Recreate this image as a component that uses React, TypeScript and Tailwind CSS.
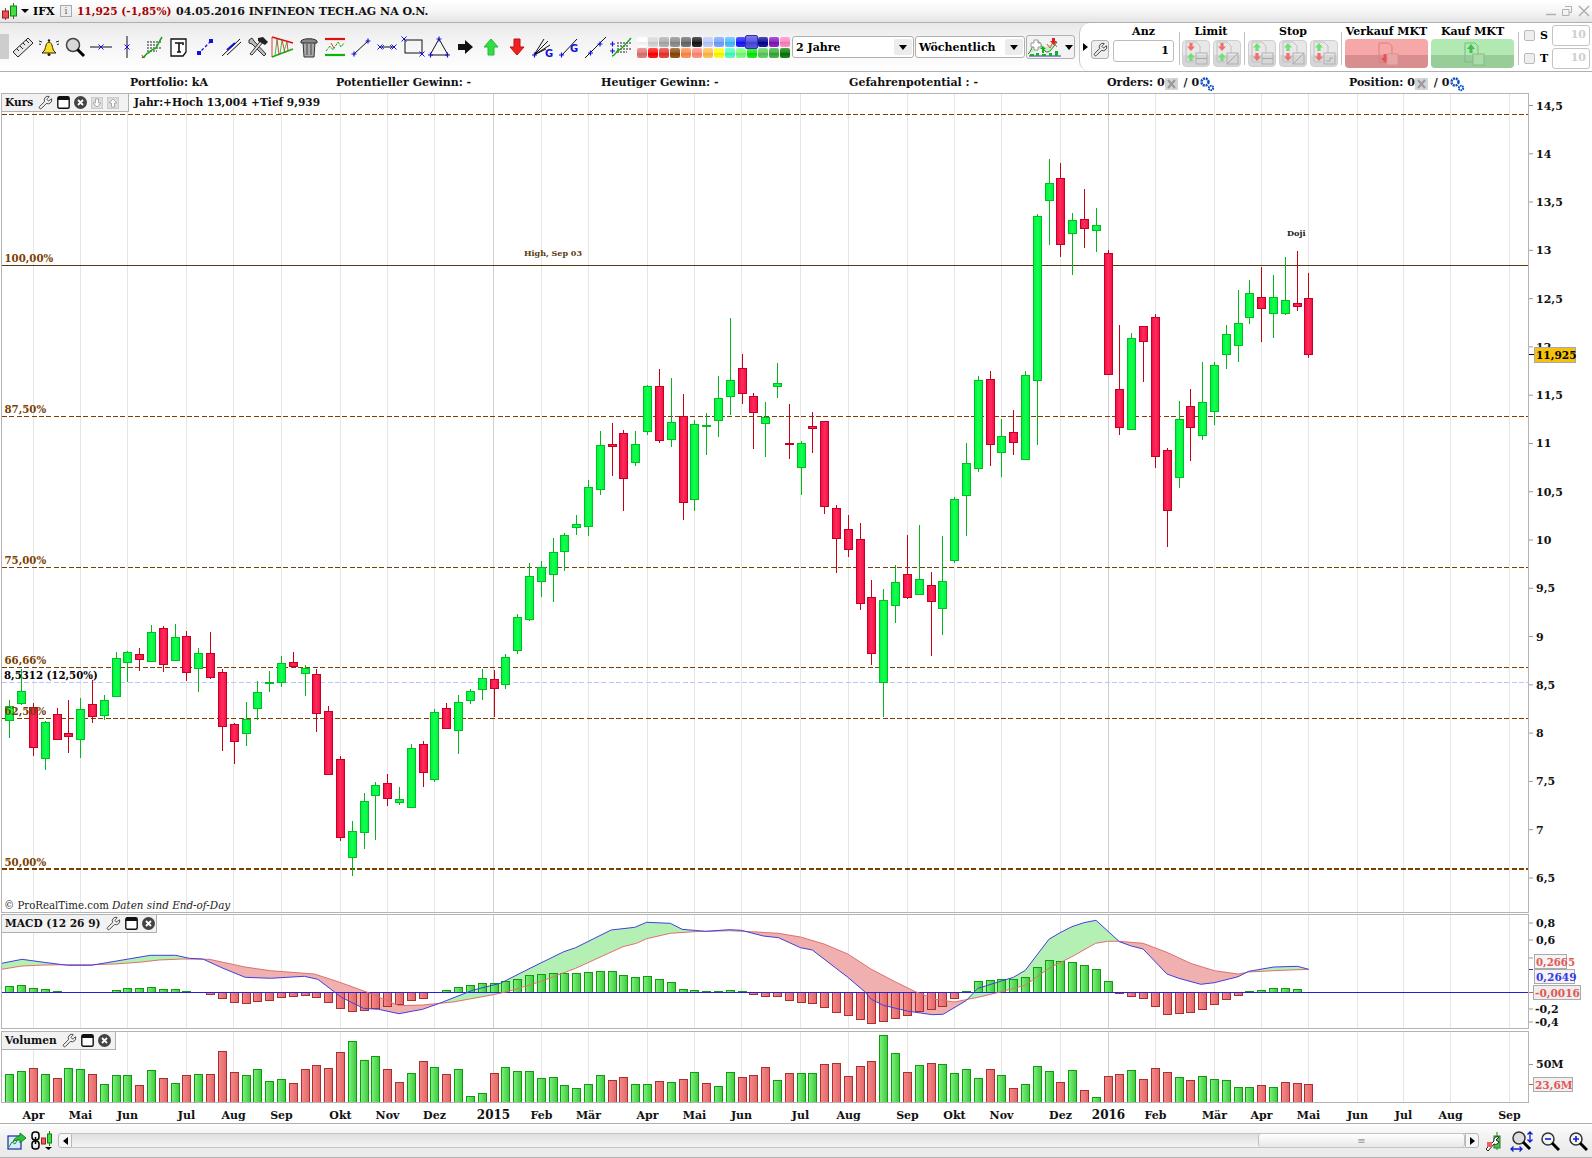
import React from 'react';
import { Wrench } from 'lucide-react';

// [wick top, body top, body bottom, wick bottom, colour] in page pixels, one per week
const CANDLES: [number, number, number, number, 'g' | 'r'][] = [
  [700,706,720,738,'g'],[669,691,703,705,'g'],[703,707,747,756,'r'],[721,722,758,770,'g'],[708,714,739,740,'r'],
  [700,733,736,753,'r'],[698,709,739,758,'g'],[680,704,716,723,'r'],[695,700,715,720,'g'],[652,658,696,696,'g'],
  [651,652,662,682,'g'],[648,654,659,671,'r'],[625,632,661,661,'g'],[626,628,664,672,'r'],[624,637,660,660,'g'],
  [631,636,672,681,'r'],[648,653,668,692,'g'],[632,653,677,679,'r'],[669,672,726,751,'r'],[723,724,741,764,'r'],
  [702,719,733,746,'g'],[681,692,708,720,'g'],[671,682,683,692,'g'],[656,663,682,687,'g'],[652,662,666,668,'r'],
  [665,668,673,696,'g'],[669,674,713,732,'r'],[706,711,774,774,'r'],[756,759,837,841,'r'],[821,831,857,876,'g'],
  [793,801,832,849,'g'],[782,785,795,840,'g'],[774,783,798,806,'r'],[787,799,802,805,'g'],[744,748,807,807,'g'],
  [741,744,772,787,'r'],[709,712,779,782,'g'],[703,708,728,728,'r'],[695,702,730,754,'g'],[689,691,700,704,'g'],
  [669,678,689,700,'g'],[670,679,688,717,'r'],[654,657,684,689,'g'],[614,617,650,654,'g'],[563,576,619,621,'g'],
  [561,567,581,597,'g'],[538,552,574,602,'g'],[533,535,551,571,'g'],[515,524,527,535,'g'],[480,487,526,536,'g'],
  [431,445,489,495,'g'],[423,444,446,476,'r'],[430,433,478,511,'r'],[431,444,462,466,'g'],[385,386,431,435,'g'],
  [369,386,440,443,'r'],[378,422,439,447,'g'],[394,416,502,520,'r'],[420,424,499,511,'g'],[413,425,426,455,'g'],
  [376,398,420,437,'g'],[318,380,396,415,'g'],[354,368,393,404,'r'],[393,396,412,449,'r'],[402,417,423,457,'g'],
  [363,383,386,398,'g'],[404,443,444,459,'r'],[441,443,467,495,'g'],[412,426,428,453,'r'],[421,421,506,514,'r'],
  [505,508,538,573,'r'],[515,529,549,557,'r'],[523,539,603,610,'r'],[580,597,653,665,'r'],[589,600,682,717,'g'],
  [565,582,605,623,'g'],[535,574,597,599,'r'],[525,579,594,594,'g'],[572,585,601,656,'r'],[536,581,608,635,'g'],
  [497,499,560,563,'g'],[443,463,495,536,'g'],[376,380,468,472,'g'],[371,379,444,466,'r'],[419,436,452,477,'g'],
  [410,432,442,455,'r'],[371,375,459,460,'g'],[214,216,380,445,'g'],[159,183,200,245,'g'],[163,178,244,257,'r'],
  [213,220,233,275,'g'],[189,219,228,248,'r'],[208,225,230,252,'g'],[250,253,374,374,'r'],[325,389,427,435,'r'],
  [333,338,429,429,'g'],[326,326,341,382,'r'],[314,317,456,468,'r'],[448,450,510,547,'r'],[401,419,477,488,'g'],
  [389,406,427,461,'r'],[362,402,435,440,'g'],[362,365,411,425,'g'],[325,334,354,369,'g'],[290,323,345,362,'g'],
  [280,293,317,324,'g'],[267,297,308,342,'r'],[275,297,313,338,'g'],[257,300,313,315,'g'],[251,303,306,311,'r'],
  [273,298,354,358,'r'],
];

const HIST = [
  6,7,4,3,1,0,0,0,0,2,4,4,5,3,3,1,0,-2,-6,-10,-11,-9,-8,-5,-4,-3,-5,-10,-16,-19,-18,-16,-14,-12,-8,-6,0,2,5,7,9,9,11,13,17,
  18,19,19,19,20,21,21,17,15,16,13,10,3,2,1,1,2,1,-2,-4,-4,-8,-10,-11,-15,-20,-23,-27,-31,-29,-26,-23,-19,-17,-14,-6,1,11,12,13,13,15,25,32,
  31,30,27,23,11,-1,-4,-6,-14,-22,-21,-20,-17,-12,-7,-3,1,2,4,4,3,0,
];

const VOL: [number, 'g' | 'r'][] = [
  [28,'g'],[31,'g'],[34,'r'],[28,'g'],[24,'r'],[34,'g'],[33,'g'],[28,'r'],[18,'g'],[27,'g'],[27,'g'],[17,'r'],[32,'g'],[24,'r'],[19,'g'],
  [27,'r'],[28,'g'],[28,'r'],[51,'r'],[30,'r'],[27,'g'],[33,'g'],[21,'g'],[23,'g'],[19,'r'],[33,'r'],[37,'r'],[34,'r'],[50,'r'],[61,'g'],
  [42,'g'],[46,'g'],[33,'r'],[20,'r'],[29,'g'],[41,'r'],[35,'g'],[28,'r'],[33,'g'],[6,'g'],[9,'g'],[29,'r'],[35,'g'],[31,'g'],[31,'g'],
  [24,'g'],[25,'g'],[17,'g'],[14,'g'],[18,'g'],[27,'g'],[22,'r'],[25,'r'],[18,'g'],[18,'g'],[21,'r'],[20,'g'],[23,'r'],[30,'g'],[19,'r'],
  [16,'g'],[30,'g'],[25,'r'],[27,'r'],[35,'r'],[22,'g'],[29,'r'],[29,'g'],[29,'g'],[38,'r'],[39,'r'],[26,'r'],[36,'r'],[41,'r'],[67,'g'],
  [49,'g'],[30,'r'],[37,'g'],[39,'r'],[38,'g'],[29,'g'],[33,'g'],[24,'g'],[33,'r'],[27,'g'],[14,'r'],[18,'g'],[36,'g'],[31,'g'],[20,'r'],
  [32,'g'],[12,'r'],[5,'g'],[26,'r'],[28,'r'],[32,'g'],[23,'r'],[34,'r'],[30,'r'],[25,'g'],[22,'r'],[26,'g'],[23,'g'],[22,'g'],[15,'g'],
  [15,'g'],[17,'r'],[15,'g'],[20,'r'],[19,'r'],[18,'r'],
];

const pts = (off: number, sx: number, raw: number[][]) => raw.map(([x, v]) => [off + x / sx, 900 + v / 3]);

const BLUE = [
  ...pts(0, 2.958, [[5,190],[65,178],[130,187],[200,196],[270,196],[340,184],[445,166],[520,166],[560,175],[600,177],[660,205],[725,232],[800,235],[900,229],[940,238],[1010,292],[1075,325],[1120,328],[1180,341],[1250,328],[1300,310],[1400,270],[1480,250]]),
  ...pts(530, 2.958, [[0,205],[100,155],[135,143],[240,90],[310,82],[345,67],[415,70],[450,88],[520,94],[590,89],[625,91],[690,108],[735,113],[800,143],[835,150],[940,232],[990,275],[1010,298],[1045,316],[1120,334],[1190,344],[1222,343],[1290,302],[1325,265],[1430,232],[1465,211],[1535,118]]),
  ...pts(1060, 2.947, [[0,98],[35,80],[70,68],[106,61],[175,125],[210,138],[245,147],[315,222],[350,235],[415,253],[455,248],[525,230],[556,214],[630,201],[700,199],[733,208]]),
];
const SIGNAL = [
  ...pts(0, 2.958, [[5,208],[65,198],[130,195],[200,194],[270,194],[340,192],[420,186],[470,180],[540,177],[620,178],[660,187],[725,201],[800,212],[930,222],[1000,245],[1090,278],[1180,317],[1250,315],[1340,306],[1450,286],[1500,275]]),
  ...pts(530, 2.958, [[0,255],[50,238],[135,205],[275,140],[315,130],[345,116],[415,100],[485,95],[590,92],[655,95],[735,100],[800,111],[870,132],[940,162],[1010,208],[1080,245],[1140,275],[1200,298],[1255,306],[1325,292],[1395,275],[1465,256],[1535,205]]),
  ...pts(1060, 2.947, [[0,188],[35,170],[105,130],[140,124],[175,124],[245,130],[315,157],[385,190],[455,212],[525,222],[556,216],[630,212],[733,208]]),
];

const GRID: [number, string][] = [
  [33,'Apr'],[80,'Mai'],[127,'Jun'],[186,'Jul'],[233,'Aug'],[281,'Sep'],[340,'Okt'],[387,'Nov'],[434,'Dez'],[493,'2015'],
  [541,'Feb'],[588,'Mär'],[647,'Apr'],[694,'Mai'],[741,'Jun'],[800,'Jul'],[848,'Aug'],[907,'Sep'],[954,'Okt'],[1001,'Nov'],
  [1060,'Dez'],[1108,'2016'],[1155,'Feb'],[1214,'Mär'],[1261,'Apr'],[1308,'Mai'],[1357,'Jun'],[1403,'Jul'],[1450,'Aug'],[1509,'Sep'],
];

const FIB_Y = [114, 416, 567, 667, 718];

const PRICES = ['14,5','14','13,5','13','12,5','12','11,5','11','10,5','10','9,5','9','8,5','8','7,5','7','6,5'];

const colX = (i: number) => Math.round(9.33 + 11.81 * i) + 0.5;

function interp(line: number[][], x: number) {
  const sorted = [...line].sort((a, b) => a[0] - b[0]);
  for (let i = 1; i < sorted.length; i++) {
    if (x <= sorted[i][0]) {
      const [x0, y0] = sorted[i - 1];
      const [x1, y1] = sorted[i];
      return y0 + ((y1 - y0) * (x - x0)) / Math.max(x1 - x0, 0.01);
    }
  }
  return sorted[sorted.length - 1][1];
}

const toPath = (line: number[][]) =>
  [...line].sort((a, b) => a[0] - b[0]).map(([x, y], i) => `${i ? 'L' : 'M'}${x.toFixed(1)} ${y.toFixed(1)}`).join(' ');

function GridLines({ y1, y2 }: { y1: number; y2: number }) {
  return (
    <g shapeRendering="crispEdges">
      {GRID.map(([x, label]) => (
        <line key={x} x1={x + 0.5} x2={x + 0.5} y1={y1} y2={y2} stroke={/^20/.test(label) ? '#cfcfcf' : '#e6e6e6'} />
      ))}
    </g>
  );
}

function BarGradients({ g, r }: { g: string; r: string }) {
  return (
    <defs>
      <linearGradient id={g}><stop offset="0" stopColor="#7cf27c" /><stop offset="1" stopColor="#3fc93f" /></linearGradient>
      <linearGradient id={r}><stop offset="0" stopColor="#f88888" /><stop offset="1" stopColor="#e06868" /></linearGradient>
    </defs>
  );
}

function PriceChart() {
  return (
    <svg width={1526} height={818} viewBox="2 94 1526 818" className="block">
      <defs>
        <linearGradient id="cg"><stop offset="0" stopColor="#00f040" /><stop offset="0.5" stopColor="#12ff50" /><stop offset="1" stopColor="#00f040" /></linearGradient>
        <linearGradient id="cr"><stop offset="0" stopColor="#f01040" /><stop offset="0.5" stopColor="#ff2a60" /><stop offset="1" stopColor="#f01040" /></linearGradient>
      </defs>
      <GridLines y1={94} y2={912} />
      <g shapeRendering="crispEdges">
        {FIB_Y.map((y) => (
          <line key={y} x1={2} x2={1528} y1={y + 0.5} y2={y + 0.5} stroke="#7a3e00" strokeDasharray="5 2.4" />
        ))}
        <line x1={2} x2={1528} y1={265.5} y2={265.5} stroke="#5a3a10" />
        <line x1={2} x2={1528} y1={682.5} y2={682.5} stroke="#b4c8ff" strokeDasharray="5 2.4" />
        <line x1={2} x2={1528} y1={869} y2={869} stroke="#7a3e00" strokeWidth={2} strokeDasharray="5 2.4" />
        {CANDLES.map(([wt, bt, bb, wb, c], i) => {
          const x = colX(i);
          return (
            <g key={i}>
              <line x1={x} x2={x} y1={wt} y2={wb} stroke={c === 'g' ? '#00b818' : '#c80010'} />
              <rect x={x - 4} y={bt + 0.5} width={8} height={Math.max(bb - bt, 1)} fill={`url(#c${c})`} stroke={c === 'g' ? '#00c020' : '#c80020'} />
            </g>
          );
        })}
      </g>
      <g fontWeight="700" fontSize="10.2" fill="#7a4000">
        <text x={4.5} y={262}>100,00%</text>
        <text x={4.5} y={413}>87,50%</text>
        <text x={4.5} y={564}>75,00%</text>
        <text x={4.5} y={664}>66,66%</text>
        <text x={4.5} y={715}>62,50%</text>
        <text x={4.5} y={866}>50,00%</text>
      </g>
      <text x={4} y={679} fontWeight="700" fontSize="10.2" fill="#000">8,5312 (12,50%)</text>
      <text x={524} y={256} fontWeight="700" fontSize="8" fill="#5a3a10">High, Sep 03</text>
      <text x={1287} y={236} fontWeight="700" fontSize="8.2" fill="#222">Doji</text>
      <text x={4} y={909} fontSize="10.2" fill="#222">© ProRealTime.com</text>
      <text x={112} y={909} fontSize="10.4" fontStyle="italic" fill="#222">Daten sind End-of-Day</text>
    </svg>
  );
}

function PriceAxis() {
  return (
    <svg width={63} height={820} viewBox="1529 93 63 820" className="block">
      {PRICES.map((p, i) => {
        const y = 105.5 + i * 48.28;
        return (
          <g key={p}>
            <line x1={1529} x2={1533} y1={y} y2={y} stroke="#999" />
            <text x={1536} y={y + 4} fontWeight="700" fontSize="11" fill="#111">{p}</text>
          </g>
        );
      })}
      <line x1={1529} x2={1534} y1={354.5} y2={354.5} stroke="#000" />
      <rect x={1534.5} y={347.5} width={41} height={15} fill="#f4c20d" stroke="#a8a8a8" />
      <text x={1536} y={359} fontWeight="700" fontSize="10.6" fill="#000">11,925</text>
    </svg>
  );
}

function MacdChart() {
  const green: string[] = [];
  const red: string[] = [];
  for (let x = 2; x < 1309; x++) {
    const b = interp(BLUE, x + 0.5);
    const s = interp(SIGNAL, x + 0.5);
    (b < s ? green : red).push(`M${x} ${b.toFixed(1)}V${s.toFixed(1)}h1V${b.toFixed(1)}z`);
  }
  return (
    <svg width={1526} height={113} viewBox="2 915 1526 113" className="block">
      <BarGradients g="bg" r="br" />
      <GridLines y1={915} y2={1028} />
      <path d={green.join('')} fill="#b4f0b4" shapeRendering="crispEdges" />
      <path d={red.join('')} fill="#f0b0b0" shapeRendering="crispEdges" />
      <g shapeRendering="crispEdges">
        {HIST.map((h, i) => {
          if (h === 0) return null;
          const x = colX(i);
          return h > 0 ? (
            <rect key={i} x={x - 4} y={992.5 - h} width={8} height={h} fill="url(#bg)" stroke="#109a10" />
          ) : (
            <rect key={i} x={x - 4} y={992.5} width={8} height={-h} fill="url(#br)" stroke="#a83030" />
          );
        })}
        <line x1={2} x2={1528} y1={992.5} y2={992.5} stroke="#2020e0" />
      </g>
      <path d={toPath(SIGNAL)} fill="none" stroke="#e07070" strokeWidth={1} />
      <path d={toPath(BLUE)} fill="none" stroke="#4040e0" strokeWidth={1} />
    </svg>
  );
}

function MacdAxis() {
  return (
    <svg width={63} height={115} viewBox="1529 914 63 115" className="block">
      {[[923,'0,8'],[940,'0,6'],[958,'0,4'],[1009,'-0,2'],[1022,'-0,4']].map(([y, t]) => (
        <g key={t}>
          <line x1={1529} x2={1533} y1={y} y2={y} stroke="#999" />
          <text x={t === '-0,2' || t === '-0,4' ? 1535 : 1536} y={Number(y) + 4} fontWeight="700" fontSize="11" fill="#111">{t}</text>
        </g>
      ))}
      <line x1={1529} x2={1533} y1={969.5} y2={969.5} stroke="#3030e0" />
      <line x1={1529} x2={1533} y1={992.5} y2={992.5} stroke="#e05050" />
      <rect x={1534.5} y={954.5} width={32} height={14} fill="#f4f4f4" stroke="#aaa" />
      <text fontWeight="700" x={1536} y={965.5} fontSize="10.2" fill="#e05858">0,2665</text>
      <rect x={1534.5} y={969.5} width={40} height={14} fill="#f4f4f4" stroke="#aaa" />
      <text fontWeight="700" x={1536} y={980.5} fontSize="10.6" fill="#3838e8">0,2649</text>
      <rect x={1533.5} y={985.5} width={47} height={14} fill="#eeeeee" stroke="#aaa" />
      <text fontWeight="700" x={1535} y={996.5} fontSize="10.6" fill="#e05858">-0,0016</text>
    </svg>
  );
}

function VolumeChart() {
  return (
    <svg width={1526} height={70} viewBox="2 1032 1526 70" className="block">
      <BarGradients g="vg" r="vr" />
      <GridLines y1={1032} y2={1102} />
      <g shapeRendering="crispEdges">
        {VOL.map(([h, c], i) => {
          const x = colX(i);
          return <rect key={i} x={x - 4} y={1102.5 - h} width={8} height={h + 1} fill={`url(#v${c})`} stroke={c === 'g' ? '#109a10' : '#a83030'} />;
        })}
      </g>
    </svg>
  );
}

function VolumeAxis() {
  return (
    <svg width={63} height={72} viewBox="1529 1031 63 72" className="block">
      <line x1={1529} x2={1533} y1={1064.5} y2={1064.5} stroke="#999" />
      <text x={1536} y={1067.5} fontWeight="700" fontSize="11" fill="#111">50M</text>
      <line x1={1529} x2={1533} y1={1084.5} y2={1084.5} stroke="#e05050" />
      <rect x={1533.5} y={1077.5} width={39} height={14} fill="#f0f0f0" stroke="#aaa" />
      <text x={1535} y={1088.5} fontWeight="700" fontSize="10.6" fill="#e05858">23,6M</text>
    </svg>
  );
}

function TimeAxis() {
  return (
    <svg width={1592} height={20} viewBox="0 1103 1592 20" className="block">
      {GRID.map(([x, label]) => (
        <text key={x} x={x + 0.5} y={1119} textAnchor="middle" fontWeight="700" fontSize={/^20/.test(label) ? 12 : 11} fill="#111">{label}</text>
      ))}
    </svg>
  );
}

function Ic({ children, w = 24 }: { children: React.ReactNode; w?: number }) {
  return <svg width={w} height={24} viewBox={`0 0 ${w} 24`} className="block shrink-0">{children}</svg>;
}

const BX = ({ x, y }: { x: number; y: number }) => (
  <path d={`M${x - 2.5} ${y - 2.5}l5 5m0-5l-5 5`} stroke="#1010e0" strokeWidth={1} fill="none" />
);

const TOOL_ICONS: React.ReactNode[] = [
  // ruler
  <g key="ruler"><path d="M2 17 L17 3 L22 8 L7 22Z" fill="#e8e8e8" stroke="#222" /><path d="M6 14l2 2M9 11l3 3M12 8l2 2M15 5l3 3" stroke="#222" /></g>,
  // bell
  <g key="bell"><path d="M7 16c2-2 1-8 5-9 4 1 3 7 5 9l2 2H5z" fill="#ffe020" stroke="#222" /><circle cx="12" cy="19.5" r="1.5" fill="#222" /><circle cx="12" cy="5.5" r="1.2" fill="#222" /><path d="M2 6l3 1M2 9l2 .5M22 6l-3 1M22 9l-2 .5" stroke="#222" /></g>,
  // magnifier
  <g key="mag"><circle cx="10" cy="10" r="6.5" fill="#d8d8d8" stroke="#444" strokeWidth="1.5" /><path d="M14.5 14.5L21 21" stroke="#000" strokeWidth="3" /></g>,
  // horizontal line
  <g key="hl"><path d="M1 12H23" stroke="#111" /><BX x={12} y={12} /></g>,
  // vertical line
  <g key="vl"><path d="M12 1V23" stroke="#111" /><BX x={12} y={12} /></g>,
  // fibonacci
  <g key="fib"><path d="M6 7h14M6 10h12M6 13h14M6 16h10" stroke="#222" strokeDasharray="2 1" /><path d="M1 22c2 2 4-4 6-4s3-4 6-4 4-6 8-12" stroke="#10a810" strokeWidth="1.5" fill="none" /><path d="M1 20c1 3 2 3 3 2" stroke="#e02020" fill="none" /></g>,
  // text
  <g key="text"><path d="M4 4h15v13l-3 4H4z" fill="#fff" stroke="#111" strokeWidth="1.3" /><path d="M8 8h8v2M12 8v9M10 17h4" stroke="#111" strokeWidth="1.6" fill="none" /></g>,
  // blue cross line
  <g key="xl"><path d="M5 19L19 5" stroke="#1010e0" strokeWidth="1.3" strokeDasharray="3 2" /><rect x="4" y="16" width="4" height="4" fill="#1010e0" /><rect x="16" y="4" width="4" height="4" fill="#1010e0" /></g>,
  // parallel
  <g key="par"><path d="M3 21L21 4" stroke="#111" /><path d="M8 20L22 7" stroke="#111" /><path d="M8 15L16 8" stroke="#1010e0" strokeWidth="2" /></g>,
  // tools
  <g key="tools"><path d="M4 5l3-2 2 3 12 13-2 2L7 9 4 8z" fill="#bbb" stroke="#333" /><path d="M20 5l-13 15-2-1 12-15z" fill="#ddd" stroke="#333" /><path d="M13 3l5-1 5 5-3 3-7-4z" fill="#222" /></g>,
  // triangle fib
  <g key="tri"><path d="M1 2L22 8" stroke="#e01010" strokeWidth="1.6" /><path d="M1 22L22 14" stroke="#10b010" strokeWidth="1.6" /><path d="M1 2V22M6 4l2 16M11 5l3 13M16 7l1 9" stroke="#e01010" strokeWidth=".8" fill="none" /><path d="M6 4l-2 17M11 5l-2 14M16 7l-3 9" stroke="#10b010" strokeWidth=".8" fill="none" /></g>,
  // trash
  <g key="trash"><path d="M6 7h12l-1 15H7z" fill="#aaa" stroke="#333" /><path d="M4 6c2-3 14-3 16 0v2H4z" fill="#888" stroke="#333" /><path d="M10 9v11M14 9v11" stroke="#444" /><path d="M9 3h6v2H9z" fill="#666" /></g>,
  // channel
  <g key="chan"><path d="M2 4H22" stroke="#e01010" strokeWidth="2.2" /><path d="M2 20H22" stroke="#10b010" strokeWidth="2.2" /><path d="M3 16l4-5 3 4 5-8 3 5 3-4" stroke="#20a020" fill="none" strokeDasharray="3 1" /><path d="M8 8l3 5" stroke="#e03030" /></g>,
  // short line
  <g key="line"><path d="M5 19L19 6" stroke="#111" /><path d="M2.5 19h5M5 16.5v5M16.5 6h5M19 3.5v5" stroke="#1010e0" strokeWidth="1.2" /></g>,
  // horizontal measure
  <g key="meas"><path d="M6 12H18" stroke="#111" /><BX x={5} y={12} /><BX x={19} y={12} /><path d="M9 10l-2 2 2 2M15 10l2 2-2 2" stroke="#1010e0" fill="none" strokeWidth=".8" /></g>,
  // rectangle
  <g key="rect"><rect x="4" y="5" width="17" height="13" fill="none" stroke="#111" /><BX x={3} y={4} /><BX x={21} y={19} /></g>,
  // triangle
  <g key="tr"><path d="M12 4L3 20H21Z" fill="none" stroke="#111" /><path d="M9.5 4h5M12 1.5v5M1 20h5M3.5 17.5v5M18 20h5M20.5 17.5v5" stroke="#1010e0" strokeWidth="1.2" /></g>,
  // black arrow
  <path key="ba" d="M5 9h7V5l8 7-8 7v-4H5z" fill="#111" />,
  // up
  <path key="up" d="M12 4l7 8h-4v8H9v-8H5z" fill="#30e040" stroke="#28b838" />,
  // down
  <path key="down" d="M9 4h6v8h4l-7 8-7-8h4z" fill="#f02020" stroke="#c01010" />,
  // fan with G
  <g key="fan"><path d="M3 20L13 4M3 20L17 6M3 20L19 10M3 20L15 14" stroke="#111" /><path d="M1 20h5M3.5 17.5v5" stroke="#1010e0" strokeWidth="1.2" /><text x="14" y="22" fontSize="10" fontWeight="700" fontFamily="'DejaVu Sans',sans-serif" fill="#1010e0">G</text></g>,
  // line with G
  <g key="lg"><path d="M5 20L20 4" stroke="#111" /><path d="M2 20h5M4.5 17.5v5" stroke="#1010e0" strokeWidth="1.2" /><text x="13" y="17" fontSize="10" fontWeight="700" fontFamily="'DejaVu Sans',sans-serif" fill="#1010e0">G</text></g>,
  // extended line
  <g key="ext"><path d="M2 23L23 2" stroke="#111" /><path d="M5 18h5M7.5 15.5v5M14.5 9h5M17 6.5v5" stroke="#1010e0" strokeWidth="1.2" /></g>,
  // fib 2
  <g key="fib2"><path d="M8 8h14M8 11h12M8 14h14M8 17h10" stroke="#222" strokeDasharray="2 1" /><path d="M3 21c3 0 4-5 7-6s5-4 12-12" stroke="#10a810" strokeWidth="1.4" fill="none" /><path d="M1 9h5M3.5 6.5v5M1 16h5M3.5 13.5v5" stroke="#1010e0" strokeWidth="1.2" /></g>,
];

const TOP_SWATCHES = ['#ffffff','#d4d4d4','#aaaaaa','#888888','#666666','#111111','#b8c8ff','#6f9fff','#44bbff','#1010ff','#4444dd','#000090','#8010c0','#ff80c0'];
const BOTTOM_SWATCHES = ['#e07070','#ff0000','#e83030','#884400','#ff8844','#ff8877','#ffbb44','#ffff00','#44ffbb','#77ff77','#00ee00','#55cc55','#33aa33','#007700'];
const GLOSS = 'bg-[linear-gradient(rgba(255,255,255,.3),rgba(255,255,255,.1)_50%,rgba(0,0,0,.08)_50%,rgba(255,255,255,.12))]';

function SelectBox({ label, w }: { label: string; w: string }) {
  return (
    <div className={`${w} h-[22px] bg-white border border-[#b0b0b0] rounded-[3px] flex items-center pl-[3px] pr-[1px] shrink-0`}>
      <span className="flex-1 pt-[2px] font-bold text-[11px] text-black">{label}</span>
      <span className="w-[18px] h-[16px] bg-[#ececec] rounded-[2px] flex items-center justify-center">
        <span className="w-0 h-0 border-x-[4px] border-x-transparent border-t-[5px] border-t-black" />
      </span>
    </div>
  );
}

function OrderIcon({ arrows, shape }: { arrows: 'downup' | 'updown'; shape: 'bar' | 'slash' | 'stair' }) {
  const up = (y: number) => <path d={`M8 ${y}l-4 4.5h2.4V${y + 8}h3.2v-3.5H12z`} fill="#70e070" />;
  const down = (y: number) => <path d={`M6.4 ${y}h3.2v3.5H12L8 ${y + 8}l-4-4.5h2.4z`} fill="#f07070" />;
  return (
    <svg width={26} height={25} viewBox="0 0 26 25" className="block">
      <path d="M3 1h10l4 4v7M3 1v20h8" fill="none" stroke="#c0c0c0" />
      {arrows === 'downup' && <>{down(2)}{up(12)}</>}
      {arrows === 'updown' && <>{up(2)}{down(12)}</>}
      <rect x="13" y="12" width="11" height="11" fill="none" stroke="#b0b0b0" />
      {shape === 'bar' && <path d="M13 17.5h11" stroke="#a8a8a8" />}
      {shape === 'slash' && <path d="M13 23l11-11" stroke="#a8a8a8" />}
      {shape === 'stair' && <path d="M15 20h4v-3h3" stroke="#a8a8a8" fill="none" />}
    </svg>
  );
}

function OrderButton(props: { arrows: 'downup' | 'updown'; shape: 'bar' | 'slash' | 'stair' }) {
  return (
    <div className="w-[28px] h-[27px] rounded-[4px] border border-[#cfcfcf] bg-[linear-gradient(#e8e8e8_55%,#d6d6d6_55%)] flex items-center justify-center">
      <OrderIcon {...props} />
    </div>
  );
}

function Sep() {
  return <div className="w-px h-[33px] mt-[9px] bg-[#c0c0c0] shrink-0" />;
}

function Label({ children }: { children: React.ReactNode }) {
  return <div className="h-[17px] pt-[2px] flex items-center justify-center font-bold text-[11px] text-black whitespace-nowrap">{children}</div>;
}

function Toolbar() {
  return (
    <div className="h-[49px] flex border-b border-[#b0b0b0] bg-[linear-gradient(#e8e8e8,#f2f2f2_30%,#ffffff)]">
      <div className="w-[9px] h-[25px] mt-[11px] bg-[#cdcdcd] shrink-0" />
      <div className="h-[48px] flex items-center shrink-0 w-[625px] pl-px">
        {TOOL_ICONS.map((icon, i) => (
          <div key={i} className="w-[26px] flex justify-center shrink-0"><Ic>{icon}</Ic></div>
        ))}
      </div>
      <div className="w-[154px] ml-[2px] mt-[14px] shrink-0 grid grid-cols-[repeat(14,11px)] grid-rows-[11px_11px] h-[22px]">
        {TOP_SWATCHES.map((c, i) =>
          i === 10 ? (
            <div key={i} className={`relative z-10 -mx-px -mt-[2px] h-[14px] rounded-[2px] border border-[#3030b0] ${GLOSS}`} style={{ backgroundColor: c }} />
          ) : (
            <div key={i} className={`mx-[0.5px] h-[10px] rounded-[2px] ${GLOSS}`} style={{ backgroundColor: c }} />
          )
        )}
        {BOTTOM_SWATCHES.map((c, i) => (
          <div key={i} className={`mx-[0.5px] h-[10px] rounded-[2px] ${GLOSS}`} style={{ backgroundColor: c }} />
        ))}
      </div>
      <div className="flex gap-[1px] ml-[2px] mt-[13px] shrink-0">
        <SelectBox label="2 Jahre" w="w-[122px]" />
        <SelectBox label="Wöchentlich" w="w-[110px]" />
        <div className="w-[49px] h-[24px] -mt-px rounded-[3px] border border-[#b0b0b0] bg-[#f2f2f2] flex items-center shrink-0">
          <svg width={36} height={22} viewBox="0 0 36 22" className="block">
            <path d="M1 18c3-2 4-9 8-12s5 5 9 9 8-4 12-9" fill="#c8f0c8" stroke="#208020" />
            <path d="M4 7h3V4h4v3h3v4h-3v3H7v-3H4z" fill="#fff" stroke="#999" />
            <path d="M20 8l3 4 3-6 4 5" stroke="#e05050" fill="none" />
            <path d="M15 17v-4h-2l3-3 3 3h-2v4z" fill="#10b010" />
            <path d="M25 2h3v3h2l-3.500 4L23 5h2z" fill="#e02020" />
            <path d="M2 20h32" stroke="#3030c0" />
            <path d="M3 18h4v2H3zM9 17h3v3H9zM15 18h4v2h-4zM22 17h3v3h-3zM28 15h3v5h-3z" fill="#10b030" />
          </svg>
          <span className="ml-[2px] w-0 h-0 border-x-[4px] border-x-transparent border-t-[5px] border-t-black" />
        </div>
      </div>
      <div className="ml-[4px] flex flex-1 min-w-0 bg-white border-l border-[#c8c8c8] rounded-l-[10px]">
        <div className="w-[11px] flex items-center justify-center shrink-0">
          <span className="w-0 h-0 border-y-[4px] border-y-transparent border-l-[5px] border-l-black" />
        </div>
        <div className="w-[18px] h-[19px] mt-[17px] rounded-[3px] border border-[#b0b0b0] bg-[#eeeeee] flex items-center justify-center shrink-0">
          <Wrench size={15} strokeWidth={1.3} className="text-[#222]" />
        </div>
        <div className="w-[61px] ml-[4px] shrink-0">
          <Label>Anz</Label>
          <div className="h-[22px] rounded-[3px] border border-[#bbb] bg-white flex items-center justify-end pr-[4px] font-bold text-[11px] text-black">1</div>
        </div>
        <div className="ml-[5px]"><Sep /></div>
        <div className="w-[58px] ml-[2px] shrink-0">
          <Label>Limit</Label>
          <div className="flex gap-[3px]">
            <OrderButton arrows="downup" shape="bar" />
            <OrderButton arrows="downup" shape="slash" />
          </div>
        </div>
        <div className="ml-[4px]"><Sep /></div>
        <div className="w-[90px] ml-[3px] shrink-0">
          <Label>Stop</Label>
          <div className="flex gap-[3px]">
            <OrderButton arrows="updown" shape="bar" />
            <OrderButton arrows="updown" shape="slash" />
            <OrderButton arrows="updown" shape="stair" />
          </div>
        </div>
        <div className="ml-[3px]"><Sep /></div>
        <div className="w-[83px] ml-[3px] shrink-0">
          <Label>Verkauf MKT</Label>
          <div className="h-[29px] -mt-px rounded-[4px] bg-[linear-gradient(#f6a8a8_55%,#d88e8e_55%)] flex items-center justify-center">
            <svg width={24} height={24} viewBox="0 0 24 24" className="block">
              <path d="M4 1h10l3 3v10M4 1v19h8" fill="none" stroke="#d88080" />
              <path d="M8.500 12h3v4H14l-4 5-4-5h2.500z" fill="#e85050" />
              <rect x="12" y="12" width="11" height="11" fill="#f4b8b8" fillOpacity=".6" stroke="#d89090" />
            </svg>
          </div>
        </div>
        <div className="w-[83px] ml-[3px] shrink-0">
          <Label>Kauf MKT</Label>
          <div className="h-[29px] -mt-px rounded-[4px] bg-[linear-gradient(#b2e8b2_55%,#98cc98_55%)] flex items-center justify-center">
            <svg width={24} height={24} viewBox="0 0 24 24" className="block">
              <path d="M4 1h10l3 3v10M4 1v19h8" fill="none" stroke="#80b880" />
              <path d="M10 2l4 5h-2.500v4h-3V7H6z" fill="#40c050" />
              <rect x="12" y="12" width="11" height="11" fill="#b8e8b8" fillOpacity=".6" stroke="#88b888" />
            </svg>
          </div>
        </div>
        <div className="ml-[4px]"><Sep /></div>
        <div className="ml-[5px] flex-1 pt-[2px] flex flex-col gap-[2px]">
          {['S', 'T'].map((t) => (
            <div key={t} className="h-[21px] flex items-center">
              <span className="w-[11px] h-[11px] rounded-[2px] border border-[#bbb] bg-[#eeeeee] shrink-0" />
              <span className="ml-[5px] w-[12px] pt-[1px] font-bold text-[11px] text-black">{t}</span>
              <span className="w-[38px] h-[21px] rounded-[3px] border border-[#c4c4c4] flex items-center justify-end pr-[3px] font-bold text-[11px] text-[#cfcfcf]">10</span>
            </div>
          ))}
        </div>
      </div>
    </div>
  );
}

function CandleLogo() {
  return (
    <svg width={17} height={19} viewBox="0 0 17 19" className="block">
      <path d="M4.500 6v12M12.500 1v16" stroke="#555" />
      <rect x="1.500" y="9" width="6" height="7" fill="#f05050" stroke="#902020" />
      <rect x="9.500" y="4" width="6" height="10" fill="#40e040" stroke="#108010" />
    </svg>
  );
}

function TitleBar() {
  return (
    <div className="h-[23px] flex items-center border-b border-[#b0b0b0] bg-[linear-gradient(#ffffff,#f6f6f6_50%,#e4e4e4)] font-bold text-[11px] whitespace-nowrap">
      <div className="ml-[1px] w-[19px] shrink-0"><CandleLogo /></div>
      <span className="ml-[1px] w-0 h-0 border-x-[4px] border-x-transparent border-t-[4px] border-t-black shrink-0" />
      <span className="ml-[4px] w-[27px] pt-[2px] text-black">IFX</span>
      <span className="w-[12px] h-[12px] border border-[#aaa] bg-[#eee] text-[9px] leading-[10px] text-center text-[#666] font-normal shrink-0">i</span>
      <span className="ml-[5px] w-[99px] pt-[2px] text-[10.6px] text-[#a80000]">11,925 (-1,85%)</span>
      <span className="pt-[2px] text-[#111]">04.05.2016 INFINEON TECH.AG NA O.N.</span>
      <div className="ml-auto mr-[2px] flex items-center gap-[6px] text-[#b0b0b0]">
        <svg width={10} height={10} viewBox="0 0 10 10" className="block"><path d="M0 8.500h10" stroke="currentColor" strokeWidth="1.500" /></svg>
        <svg width={10} height={10} viewBox="0 0 10 10" className="block"><path d="M3 .5h6.500v6H7M.5 3.500h6.500v6H.5z" fill="none" stroke="currentColor" /></svg>
        <svg width={12} height={12} viewBox="0 0 12 12" className="block"><path d="M1 1l10 10M11 1L1 11" stroke="currentColor" strokeWidth="1.500" /></svg>
      </div>
    </div>
  );
}

function Gear() {
  return (
    <svg width={16} height={16} viewBox="0 0 16 16" className="block shrink-0">
      <circle cx="6" cy="6" r="3.500" fill="none" stroke="#1050c0" strokeWidth="2.500" strokeDasharray="2 .8" />
      <circle cx="12" cy="12" r="2.200" fill="none" stroke="#1050c0" strokeWidth="2" strokeDasharray="1.500 .6" />
    </svg>
  );
}

function CloseBox() {
  return (
    <svg width={13} height={12} viewBox="0 0 13 12" className="block shrink-0">
      <rect width="13" height="12" fill="#d4d4d4" />
      <path d="M3 2l7 8M10 2l-7 8" stroke="#999" strokeWidth="2" />
    </svg>
  );
}

function Counter({ name }: { name: string }) {
  return (
    <span className="flex items-center">
      <span>{name}: 0</span><CloseBox /><span className="ml-[6px]">/ 0</span><Gear />
    </span>
  );
}

function InfoRow() {
  return (
    <div className="h-[21px] flex items-center pl-[130px] pt-[2px] bg-white font-bold text-[11px] text-[#111] whitespace-nowrap">
      <span className="w-[206px]">Portfolio: kA</span>
      <span className="w-[265px]">Potentieller Gewinn: -</span>
      <span className="w-[248px]">Heutiger Gewinn: -</span>
      <span className="w-[258px]">Gefahrenpotential : -</span>
      <span className="w-[242px]"><Counter name="Orders" /></span>
      <Counter name="Position" />
    </div>
  );
}

function PaneIcons() {
  return (
    <>
      <Wrench size={15} strokeWidth={1.3} className="text-[#222] shrink-0" />
      <svg width={13} height={13} viewBox="0 0 13 13" className="block shrink-0"><rect x=".8" y=".8" width="11.400" height="11.400" rx="1.500" fill="#fff" stroke="#111" strokeWidth="1.400" /><rect x="1" y="1" width="11" height="3" fill="#111" /></svg>
      <svg width={13} height={13} viewBox="0 0 13 13" className="block shrink-0"><circle cx="6.500" cy="6.500" r="6.500" fill="#444" /><path d="M4 4l5 5M9 4l-5 5" stroke="#fff" strokeWidth="1.800" /></svg>
    </>
  );
}

function PaneTag({ label, w, extra }: { label: string; w: string; extra?: React.ReactNode }) {
  return (
    <div className={`absolute left-0 top-0 ${w} h-[18px] bg-[#f2f2f2] border-r border-b border-[#b0b0b0] flex items-center gap-[4px] pl-[3px] font-bold text-[10.6px] text-[#111] whitespace-nowrap`}>
      <span className="mr-[1px]">{label}</span>
      <PaneIcons />
      {extra}
    </div>
  );
}

function Pane({ h, chart, axis, tag }: { h: string; chart: React.ReactNode; axis: React.ReactNode; tag: React.ReactNode }) {
  return (
    <div className={`${h} flex shrink-0`}>
      <div className="ml-px w-[1528px] h-full border border-[#b4b4b4] relative overflow-hidden">
        {chart}
        {tag}
      </div>
      {axis}
    </div>
  );
}

function ArrowIcons() {
  return (
    <>
      <svg width={12} height={12} viewBox="0 0 12 12" className="block shrink-0"><rect width="12" height="12" fill="#ddd" stroke="#bbb" /><path d="M4.500 2h3v4H10l-4 4-4-4h2.500z" fill="#fff" stroke="#aaa" /></svg>
      <svg width={12} height={12} viewBox="0 0 12 12" className="block shrink-0"><rect width="12" height="12" fill="#ddd" stroke="#bbb" /><path d="M4.500 10h3V6H10L6 2 2 6h2.500z" fill="#fff" stroke="#aaa" /></svg>
    </>
  );
}

function BottomBar() {
  return (
    <div className="h-[34px] bg-[linear-gradient(#fdfdfd,#f4f4f4_30%,#ececec_75%,#eaeaea)] border-b border-[#b0b0b0] flex items-center">
      <div className="w-[58px] h-full flex items-center pl-[7px] shrink-0">
        <svg width={19} height={20} viewBox="0 0 19 20" className="block">
          <rect x="1" y="5" width="13" height="13" fill="#d8e8ff" stroke="#1030a0" strokeWidth="1.200" />
          <path d="M2 16l3-5 3 2 3-5" stroke="#10a010" fill="none" />
          <path d="M6 11c2-5 5-6 7-6V2l6 5-6 5V9c-3 0-5 0-7 2z" fill="#30c040" stroke="#108020" />
        </svg>
        <svg width={9} height={19} viewBox="0 0 9 19" className="block ml-[5px]">
          <rect x="1" y="1" width="7" height="8" rx="3" fill="none" stroke="#000" strokeWidth="1.500" />
          <rect x="1" y="10" width="7" height="8" rx="3" fill="none" stroke="#000" strokeWidth="1.500" />
          <path d="M4.500 6v7" stroke="#000" strokeWidth="1.500" />
        </svg>
        <svg width={12} height={20} viewBox="0 0 12 20" className="block ml-[1px]">
          <rect x=".5" y="7" width="4" height="6" fill="#f06060" stroke="#902020" />
          <rect x="6.500" y="3" width="4" height="9" fill="#40e040" stroke="#108010" />
          <path d="M8.500 0v3M8.500 12v3" stroke="#108010" />
          <path d="M4 16h7l-3.500 3z" fill="#000" />
        </svg>
      </div>
      <div className="w-[14px] h-[15px] rounded-l-[3px] border border-[#b8b8b8] bg-[#f6f6f6] flex items-center justify-center shrink-0">
        <span className="w-0 h-0 border-y-[4px] border-y-transparent border-r-[5px] border-r-black" />
      </div>
      <div className="w-[1393px] h-[15px] flex shrink-0 border-y border-[#c4c4c4] bg-[linear-gradient(#e0e0e0,#f4f4f4)]">
        <div className="w-[1186px] shrink-0" />
        <div className="w-[207px] rounded-[3px] bg-[linear-gradient(#ffffff,#e8e8e8)] border-x border-[#c0c0c0] flex items-center justify-center shrink-0">
          <span className="text-[10px] leading-none text-[#999]">≡</span>
        </div>
      </div>
      <div className="w-[14px] h-[15px] rounded-r-[3px] border border-[#b8b8b8] bg-[#f6f6f6] flex items-center justify-center shrink-0">
        <span className="w-0 h-0 border-y-[4px] border-y-transparent border-l-[5px] border-l-black" />
      </div>
      <div className="ml-[5px] flex items-center shrink-0">
        <svg width={20} height={20} viewBox="0 0 20 20" className="block">
          <rect x="10" y="5" width="6" height="12" fill="#50c050" stroke="#208020" />
          <path d="M13 1v4M13 17v2" stroke="#208020" />
          <path d="M2 18l8-8c-1-3 2-5 5-4l-3 3 3 2c-1 2-3 3-5 2l-6 7z" fill="#fff" stroke="#222" />
          <rect x="3" y="11" width="5" height="5" fill="#f06060" />
        </svg>
        <svg width={26} height={22} viewBox="0 0 26 22" className="block ml-[6px]">
          <circle cx="9" cy="8" r="6" fill="#ddd" stroke="#333" strokeWidth="1.500" />
          <path d="M13 12l7 7" stroke="#000" strokeWidth="3" />
          <path d="M20 2v10M17.500 4.500L20 2l2.500 2.500M17.500 9.500L20 12l2.500-2.500M1 19h11M3.500 16.500L1 19l2.500 2.500M9.500 16.500L12 19l-2.500 2.500" stroke="#1020d0" strokeWidth="1.300" fill="none" />
        </svg>
        <svg width={20} height={20} viewBox="0 0 20 20" className="block ml-[4px]">
          <circle cx="8" cy="8" r="6" fill="#f4f4f4" stroke="#333" strokeWidth="1.500" />
          <path d="M12 12l7 7" stroke="#000" strokeWidth="3" />
          <path d="M5 8h6" stroke="#1020d0" strokeWidth="1.600" />
        </svg>
        <svg width={20} height={20} viewBox="0 0 20 20" className="block ml-[8px]">
          <circle cx="8" cy="8" r="6" fill="#f4f4f4" stroke="#333" strokeWidth="1.500" />
          <path d="M12 12l7 7" stroke="#000" strokeWidth="3" />
          <path d="M5 8h6M8 5v6" stroke="#1020d0" strokeWidth="1.600" />
        </svg>
      </div>
    </div>
  );
}

export default function App() {
  return (
    <div className="w-[1592px] h-[1158px] overflow-hidden flex flex-col bg-white [font-family:'DejaVu_Serif',serif]">
      <TitleBar />
      <Toolbar />
      <InfoRow />
      <Pane
        h="h-[820px]"
        chart={<PriceChart />}
        axis={<PriceAxis />}
        tag={
          <>
            <PaneTag label="Kurs" w="w-[127px]" extra={<ArrowIcons />} />
            <div className="absolute left-[132px] top-0 h-[18px] flex items-center font-bold text-[10.6px] text-[#111] whitespace-nowrap">Jahr:+Hoch 13,004 +Tief 9,939</div>
          </>
        }
      />
      <div className="h-px shrink-0" />
      <Pane h="h-[115px]" chart={<MacdChart />} axis={<MacdAxis />} tag={<PaneTag label="MACD (12 26 9)" w="w-[155px]" />} />
      <div className="h-[2px] shrink-0" />
      <Pane h="h-[72px]" chart={<VolumeChart />} axis={<VolumeAxis />} tag={<PaneTag label="Volumen" w="w-[114px]" />} />
      <div className="h-[21px] shrink-0 border-b border-[#b0b0b0]"><TimeAxis /></div>
      <BottomBar />
    </div>
  );
}
